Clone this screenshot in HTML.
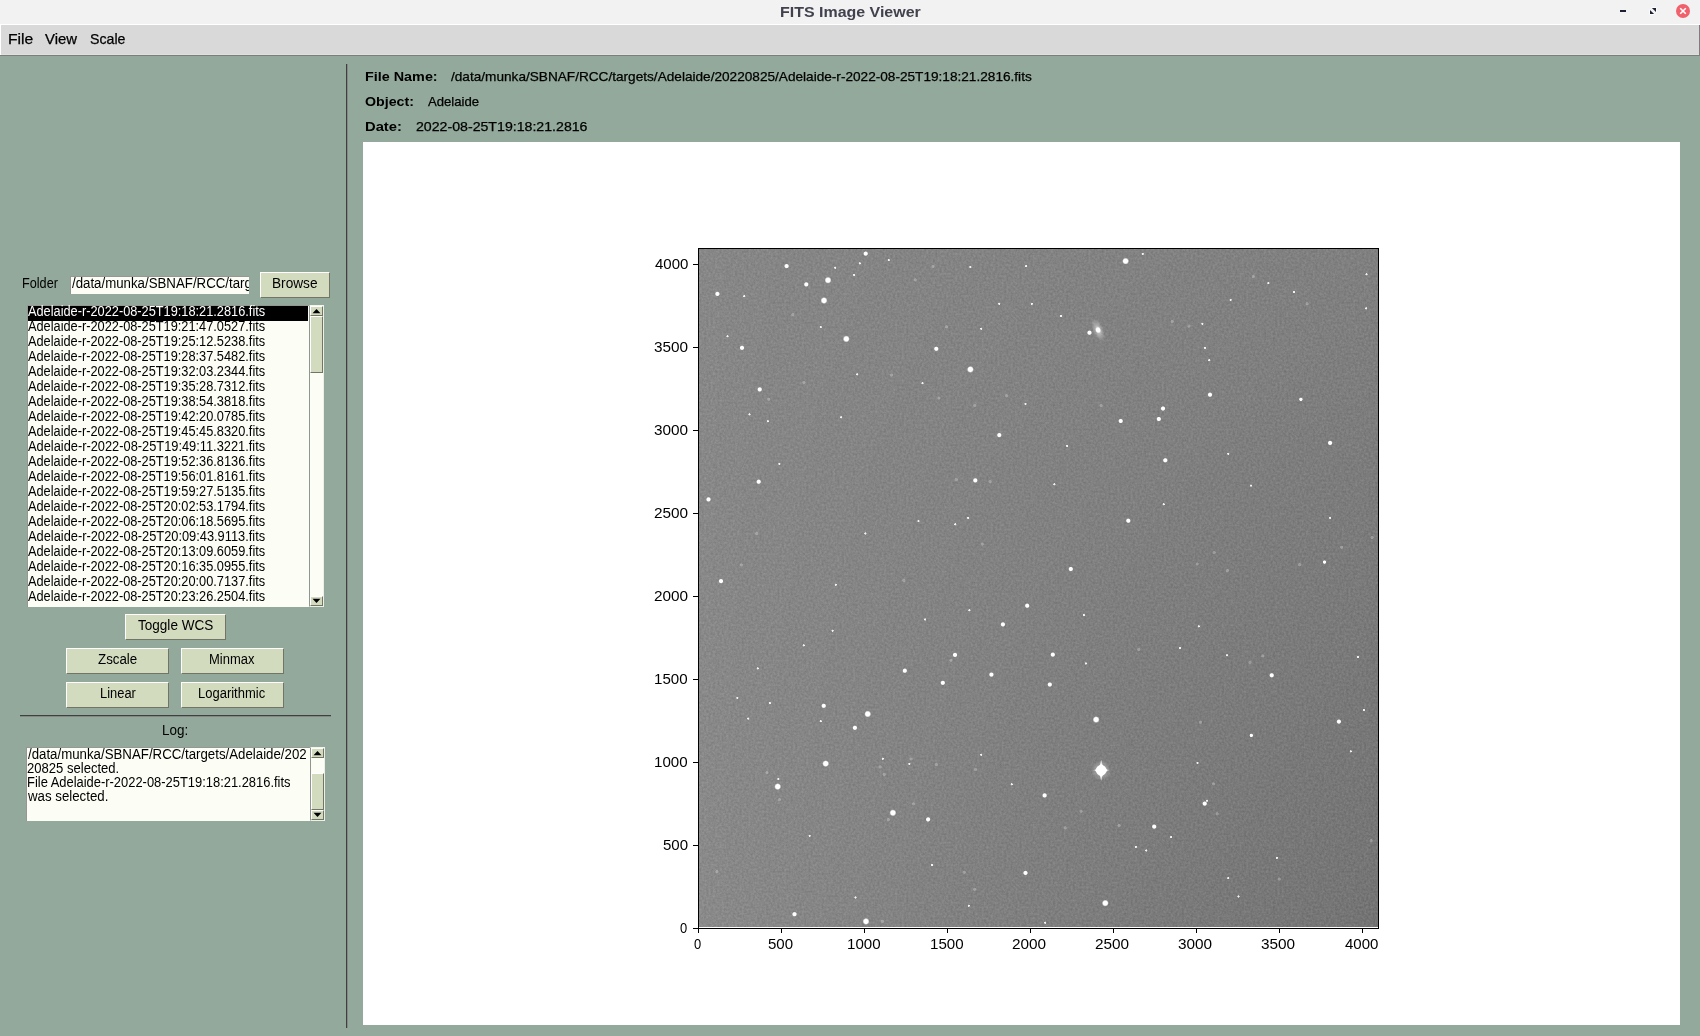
<!DOCTYPE html>
<html><head><meta charset="utf-8"><title>FITS Image Viewer</title>
<style>html,body{margin:0;padding:0;width:1700px;height:1036px;overflow:hidden;background:#92a99b;font-family:"Liberation Sans",sans-serif}
div{font-family:"Liberation Sans",sans-serif}</style></head><body>
<div style="position:absolute;left:0px;top:0px;width:1700px;height:24px;background:#f2f2f2"></div>
<div style="position:absolute;left:0px;top:24px;width:1700px;height:1px;background:#ffffff"></div>
<div style="position:absolute;left:0px;top:25px;width:1700px;height:31px;background:#d9d9d9"></div>
<div style="position:absolute;left:0px;top:25px;width:1px;height:31px;background:#ffffff"></div>
<div style="position:absolute;left:1px;top:54px;width:1698px;height:1px;background:#e0e0e0"></div>
<div style="position:absolute;left:0px;top:55px;width:1700px;height:1px;background:#7d7d7d"></div>
<div style="position:absolute;left:1699px;top:25px;width:1px;height:31px;background:#7d7d7d"></div>
<div style="position:absolute;left:0px;top:56px;width:1700px;height:980px;background:#92a99b"></div>
<div style="position:absolute;left:346px;top:64px;width:1px;height:964px;background:#404040"></div>
<div style="position:absolute;left:347px;top:64px;width:1px;height:964px;background:#848985"></div>
<div style="position:absolute;left:20px;top:715px;width:311px;height:1px;background:#404040"></div>
<div style="position:absolute;left:20px;top:716px;width:311px;height:1px;background:#848985"></div>
<div style="position:absolute;left:70px;top:276px;width:179px;height:18px;background:#fcfdf4;border-top:1px solid #959795;border-left:1px solid #959795;box-sizing:border-box"></div>
<div style="position:absolute;left:260px;top:272px;width:70px;height:26px;background:#d3dbbf;border-top:1px solid #fff;border-left:1px solid #fff;border-bottom:1px solid #727466;border-right:1px solid #727466;box-sizing:border-box"></div>
<div style="position:absolute;left:27px;top:305px;width:282px;height:302px;background:#fcfdf4;border-top:1px solid #959795;border-left:1px solid #959795;box-sizing:border-box"></div>
<div style="position:absolute;left:28px;top:306px;width:280px;height:15px;background:#000"></div>
<div style="position:absolute;left:309px;top:305px;width:15px;height:302px;background:#fcfdf4;border-left:1px solid #8f9690;border-top:1px solid #f4f6ee;border-right:1px solid #eef0e6;border-bottom:1px solid #eef0e6;box-sizing:border-box"></div>
<div style="position:absolute;left:310px;top:306px;width:13px;height:10px;background:#d3dbbf;border-top:1px solid #fff;border-left:1px solid #fff;border-bottom:1px solid #727466;border-right:1px solid #727466;box-sizing:border-box"></div>
<div style="position:absolute;left:310px;top:596px;width:13px;height:10px;background:#d3dbbf;border-top:1px solid #fff;border-left:1px solid #fff;border-bottom:1px solid #727466;border-right:1px solid #727466;box-sizing:border-box"></div>
<div style="position:absolute;left:310px;top:316px;width:13px;height:57px;background:#d3dbbf;border-top:1px solid #fff;border-left:1px solid #fff;border-bottom:1px solid #727466;border-right:1px solid #727466;box-sizing:border-box"></div>
<div style="position:absolute;left:125px;top:614px;width:101px;height:26px;background:#d3dbbf;border-top:1px solid #fff;border-left:1px solid #fff;border-bottom:1px solid #727466;border-right:1px solid #727466;box-sizing:border-box"></div>
<div style="position:absolute;left:66px;top:648px;width:103px;height:26px;background:#d3dbbf;border-top:1px solid #fff;border-left:1px solid #fff;border-bottom:1px solid #727466;border-right:1px solid #727466;box-sizing:border-box"></div>
<div style="position:absolute;left:181px;top:648px;width:103px;height:26px;background:#d3dbbf;border-top:1px solid #fff;border-left:1px solid #fff;border-bottom:1px solid #727466;border-right:1px solid #727466;box-sizing:border-box"></div>
<div style="position:absolute;left:66px;top:682px;width:103px;height:26px;background:#d3dbbf;border-top:1px solid #fff;border-left:1px solid #fff;border-bottom:1px solid #727466;border-right:1px solid #727466;box-sizing:border-box"></div>
<div style="position:absolute;left:181px;top:682px;width:103px;height:26px;background:#d3dbbf;border-top:1px solid #fff;border-left:1px solid #fff;border-bottom:1px solid #727466;border-right:1px solid #727466;box-sizing:border-box"></div>
<div style="position:absolute;left:26px;top:747px;width:285px;height:74px;background:#fcfdf4;border-top:1px solid #959795;border-left:1px solid #959795;box-sizing:border-box"></div>
<div style="position:absolute;left:310px;top:747px;width:15px;height:74px;background:#fcfdf4;border-left:1px solid #8f9690;border-top:1px solid #f4f6ee;border-right:1px solid #eef0e6;border-bottom:1px solid #eef0e6;box-sizing:border-box"></div>
<div style="position:absolute;left:311px;top:748px;width:13px;height:10px;background:#d3dbbf;border-top:1px solid #fff;border-left:1px solid #fff;border-bottom:1px solid #727466;border-right:1px solid #727466;box-sizing:border-box"></div>
<div style="position:absolute;left:311px;top:810px;width:13px;height:10px;background:#d3dbbf;border-top:1px solid #fff;border-left:1px solid #fff;border-bottom:1px solid #727466;border-right:1px solid #727466;box-sizing:border-box"></div>
<div style="position:absolute;left:311px;top:773px;width:13px;height:37px;background:#d3dbbf;border-top:1px solid #fff;border-left:1px solid #fff;border-bottom:1px solid #727466;border-right:1px solid #727466;box-sizing:border-box"></div>
<div style="position:absolute;left:363px;top:142px;width:1317px;height:883px;background:#ffffff"></div>
<div style="position:absolute;left:698px;top:248px;width:681px;height:681px;border:1px solid #000;box-sizing:border-box"></div>
<div style="position:absolute;left:693px;top:928px;width:5px;height:1px;background:#000"></div>
<div style="position:absolute;left:698px;top:928px;width:1px;height:5px;background:#000"></div>
<div style="position:absolute;left:693px;top:845px;width:5px;height:1px;background:#000"></div>
<div style="position:absolute;left:781px;top:928px;width:1px;height:5px;background:#000"></div>
<div style="position:absolute;left:693px;top:762px;width:5px;height:1px;background:#000"></div>
<div style="position:absolute;left:864px;top:928px;width:1px;height:5px;background:#000"></div>
<div style="position:absolute;left:693px;top:679px;width:5px;height:1px;background:#000"></div>
<div style="position:absolute;left:947px;top:928px;width:1px;height:5px;background:#000"></div>
<div style="position:absolute;left:693px;top:596px;width:5px;height:1px;background:#000"></div>
<div style="position:absolute;left:1030px;top:928px;width:1px;height:5px;background:#000"></div>
<div style="position:absolute;left:693px;top:513px;width:5px;height:1px;background:#000"></div>
<div style="position:absolute;left:1113px;top:928px;width:1px;height:5px;background:#000"></div>
<div style="position:absolute;left:693px;top:430px;width:5px;height:1px;background:#000"></div>
<div style="position:absolute;left:1196px;top:928px;width:1px;height:5px;background:#000"></div>
<div style="position:absolute;left:693px;top:347px;width:5px;height:1px;background:#000"></div>
<div style="position:absolute;left:1279px;top:928px;width:1px;height:5px;background:#000"></div>
<div style="position:absolute;left:693px;top:264px;width:5px;height:1px;background:#000"></div>
<div style="position:absolute;left:1362px;top:928px;width:1px;height:5px;background:#000"></div>
<svg style="position:absolute;left:1600px;top:0" width="100" height="24" viewBox="0 0 100 24"><rect x="20" y="10" width="6" height="2" fill="#1c2030"/><path d="M51.9 7.9H56V12zM50 10V14.1H54.1z" fill="#1c2030" stroke="#fff" stroke-width="1.2" stroke-linejoin="round" paint-order="stroke"/><circle cx="83" cy="11" r="7" fill="#f0616b"/><path d="M80.2 8.2l5.6 5.6M85.8 8.2l-5.6 5.6" stroke="#fff" stroke-width="1.6"/></svg><svg style="position:absolute;left:0;top:0;overflow:visible" width="1" height="1"><path d="M312.5 313.3h8l-4-4.3z" fill="#000"/><path d="M312.5 598.8h8l-4 4.3z" fill="#000"/></svg><svg style="position:absolute;left:0;top:0;overflow:visible" width="1" height="1"><path d="M313.5 755.3h8l-4-4.3z" fill="#000"/><path d="M313.5 812.8h8l-4 4.3z" fill="#000"/></svg><svg style="position:absolute;left:699px;top:249px" width="679" height="678" viewBox="699 249 679 678"><defs><linearGradient id="gL" x1="0" y1="0" x2="0" y2="1"><stop offset="0" stop-color="#878787"/><stop offset="1" stop-color="#8a8a8a"/></linearGradient><linearGradient id="gR" x1="0" y1="0" x2="1" y2="0"><stop offset="0" stop-color="#000" stop-opacity="0"/><stop offset="1" stop-color="#000" stop-opacity="1"/></linearGradient><linearGradient id="gM" x1="0" y1="0" x2="0" y2="1"><stop offset="0" stop-color="#fff" stop-opacity="0.052"/><stop offset="1" stop-color="#fff" stop-opacity="0.16"/></linearGradient><mask id="mk" maskUnits="userSpaceOnUse" x="699" y="249" width="679" height="678"><rect x="699" y="249" width="679" height="678" fill="url(#gM)"/></mask><radialGradient id="st"><stop offset="0" stop-color="#fff"/><stop offset="0.6" stop-color="#fff"/><stop offset="1" stop-color="#fff" stop-opacity="0"/></radialGradient><radialGradient id="gal"><stop offset="0" stop-color="#fff" stop-opacity="0.5"/><stop offset="1" stop-color="#fff" stop-opacity="0"/></radialGradient><radialGradient id="gal2"><stop offset="0" stop-color="#fff" stop-opacity="0.7"/><stop offset="0.5" stop-color="#fff" stop-opacity="0.3"/><stop offset="1" stop-color="#fff" stop-opacity="0"/></radialGradient><filter id="nz" x="0" y="0" width="100%" height="100%" color-interpolation-filters="sRGB"><feTurbulence type="fractalNoise" baseFrequency="0.45" numOctaves="2" seed="3" result="t"/><feColorMatrix in="t" type="matrix" values="1 0 0 0 0  1 0 0 0 0  1 0 0 0 0  0 0 0 0 1" result="g"/><feComposite in="SourceGraphic" in2="g" operator="arithmetic" k1="0" k2="1" k3="0.13" k4="-0.065"/></filter></defs><g filter="url(#nz)"><rect x="699" y="249" width="679" height="678" fill="url(#gL)"/><rect x="699" y="249" width="679" height="678" fill="url(#gR)" mask="url(#mk)"/></g><circle cx="828.0" cy="280.2" r="3.5" fill="url(#st)" fill-opacity="1"/><circle cx="824.0" cy="300.5" r="3.5" fill="url(#st)" fill-opacity="1"/><circle cx="846.3" cy="338.9" r="3.5" fill="url(#st)" fill-opacity="1"/><circle cx="970.4" cy="369.4" r="3.5" fill="url(#st)" fill-opacity="1"/><circle cx="717.4" cy="293.9" r="2.6" fill="url(#st)" fill-opacity="1"/><circle cx="806.3" cy="284.4" r="2.6" fill="url(#st)" fill-opacity="1"/><circle cx="936.3" cy="348.8" r="2.6" fill="url(#st)" fill-opacity="1"/><circle cx="999.3" cy="435.1" r="2.6" fill="url(#st)" fill-opacity="1"/><circle cx="975.3" cy="480.4" r="2.6" fill="url(#st)" fill-opacity="1"/><circle cx="758.7" cy="481.7" r="2.6" fill="url(#st)" fill-opacity="1"/><circle cx="708.5" cy="499.4" r="2.6" fill="url(#st)" fill-opacity="1"/><circle cx="721.0" cy="581.1" r="2.6" fill="url(#st)" fill-opacity="1"/><circle cx="865.7" cy="253.6" r="2.6" fill="url(#st)" fill-opacity="1"/><circle cx="742.0" cy="347.8" r="2.6" fill="url(#st)" fill-opacity="1"/><circle cx="759.7" cy="389.4" r="2.6" fill="url(#st)" fill-opacity="1"/><circle cx="786.6" cy="266.1" r="2.6" fill="url(#st)" fill-opacity="1"/><circle cx="854.2" cy="274.9" r="1.4" fill="url(#st)" fill-opacity="0.9"/><circle cx="888.7" cy="260.1" r="1.4" fill="url(#st)" fill-opacity="0.9"/><circle cx="859.8" cy="263.4" r="1.4" fill="url(#st)" fill-opacity="0.9"/><circle cx="835.2" cy="267.7" r="1.4" fill="url(#st)" fill-opacity="0.9"/><circle cx="820.7" cy="327.1" r="1.4" fill="url(#st)" fill-opacity="0.9"/><circle cx="727.5" cy="336.3" r="1.4" fill="url(#st)" fill-opacity="0.9"/><circle cx="767.9" cy="421.3" r="1.4" fill="url(#st)" fill-opacity="0.9"/><circle cx="968.1" cy="517.8" r="1.4" fill="url(#st)" fill-opacity="0.9"/><circle cx="841.1" cy="417.3" r="1.4" fill="url(#st)" fill-opacity="0.9"/><circle cx="779.4" cy="463.9" r="1.4" fill="url(#st)" fill-opacity="0.9"/><circle cx="918.5" cy="521.1" r="1.4" fill="url(#st)" fill-opacity="0.9"/><circle cx="955.3" cy="524.3" r="1.4" fill="url(#st)" fill-opacity="0.9"/><circle cx="865.4" cy="533.5" r="1.4" fill="url(#st)" fill-opacity="0.9"/><circle cx="835.8" cy="584.7" r="1.4" fill="url(#st)" fill-opacity="0.9"/><circle cx="981.2" cy="328.7" r="1.4" fill="url(#st)" fill-opacity="0.9"/><circle cx="1025.5" cy="403.9" r="1.4" fill="url(#st)" fill-opacity="0.9"/><circle cx="1026.2" cy="266.1" r="1.4" fill="url(#st)" fill-opacity="0.9"/><circle cx="970.4" cy="267.0" r="1.4" fill="url(#st)" fill-opacity="0.9"/><circle cx="999.3" cy="303.8" r="1.4" fill="url(#st)" fill-opacity="0.9"/><circle cx="1031.8" cy="303.8" r="1.4" fill="url(#st)" fill-opacity="0.9"/><circle cx="857.2" cy="374.4" r="1.4" fill="url(#st)" fill-opacity="0.9"/><circle cx="922.5" cy="383.2" r="1.4" fill="url(#st)" fill-opacity="0.9"/><circle cx="744.3" cy="296.2" r="1.4" fill="url(#st)" fill-opacity="0.9"/><circle cx="749.5" cy="414.4" r="1.4" fill="url(#st)" fill-opacity="0.9"/><circle cx="792.8" cy="314.6" r="2.0" fill="url(#st)" fill-opacity="0.25"/><circle cx="768.6" cy="399.3" r="2.0" fill="url(#st)" fill-opacity="0.25"/><circle cx="804.0" cy="382.6" r="2.0" fill="url(#st)" fill-opacity="0.25"/><circle cx="891.6" cy="375.0" r="2.0" fill="url(#st)" fill-opacity="0.25"/><circle cx="915.3" cy="279.8" r="2.0" fill="url(#st)" fill-opacity="0.25"/><circle cx="933.0" cy="266.4" r="2.0" fill="url(#st)" fill-opacity="0.25"/><circle cx="946.4" cy="326.8" r="2.0" fill="url(#st)" fill-opacity="0.25"/><circle cx="938.9" cy="398.0" r="2.0" fill="url(#st)" fill-opacity="0.25"/><circle cx="974.7" cy="405.5" r="2.0" fill="url(#st)" fill-opacity="0.25"/><circle cx="1006.5" cy="395.7" r="2.0" fill="url(#st)" fill-opacity="0.25"/><circle cx="956.3" cy="479.4" r="2.0" fill="url(#st)" fill-opacity="0.25"/><circle cx="990.1" cy="481.7" r="2.0" fill="url(#st)" fill-opacity="0.25"/><circle cx="756.7" cy="533.5" r="2.0" fill="url(#st)" fill-opacity="0.25"/><circle cx="741.3" cy="565.0" r="2.0" fill="url(#st)" fill-opacity="0.25"/><circle cx="903.8" cy="580.5" r="2.0" fill="url(#st)" fill-opacity="0.25"/><circle cx="982.2" cy="544.0" r="2.0" fill="url(#st)" fill-opacity="0.25"/><circle cx="1125.6" cy="261.1" r="3.5" fill="url(#st)" fill-opacity="1"/><circle cx="1158.8" cy="419.0" r="2.6" fill="url(#st)" fill-opacity="1"/><circle cx="1163.0" cy="408.5" r="2.6" fill="url(#st)" fill-opacity="1"/><circle cx="1120.7" cy="421.0" r="2.6" fill="url(#st)" fill-opacity="1"/><circle cx="1128.3" cy="520.7" r="2.6" fill="url(#st)" fill-opacity="1"/><circle cx="1089.5" cy="332.7" r="2.6" fill="url(#st)" fill-opacity="1"/><circle cx="1210.0" cy="394.7" r="2.6" fill="url(#st)" fill-opacity="1"/><circle cx="1165.3" cy="460.3" r="2.6" fill="url(#st)" fill-opacity="1"/><circle cx="1070.8" cy="569.0" r="2.6" fill="url(#st)" fill-opacity="1"/><circle cx="1330.1" cy="442.9" r="2.6" fill="url(#st)" fill-opacity="1"/><circle cx="1300.9" cy="399.3" r="2.1" fill="url(#st)" fill-opacity="1"/><circle cx="1324.5" cy="562.1" r="2.1" fill="url(#st)" fill-opacity="1"/><circle cx="1061.0" cy="315.9" r="1.4" fill="url(#st)" fill-opacity="0.9"/><circle cx="1142.7" cy="253.9" r="1.4" fill="url(#st)" fill-opacity="0.9"/><circle cx="1205.0" cy="347.8" r="1.4" fill="url(#st)" fill-opacity="0.9"/><circle cx="1209.3" cy="360.2" r="1.4" fill="url(#st)" fill-opacity="0.9"/><circle cx="1067.2" cy="445.9" r="1.4" fill="url(#st)" fill-opacity="0.9"/><circle cx="1054.4" cy="484.3" r="1.4" fill="url(#st)" fill-opacity="0.9"/><circle cx="1228.3" cy="453.8" r="1.4" fill="url(#st)" fill-opacity="0.9"/><circle cx="1251.0" cy="485.6" r="1.4" fill="url(#st)" fill-opacity="0.9"/><circle cx="1330.1" cy="517.8" r="1.4" fill="url(#st)" fill-opacity="0.9"/><circle cx="1163.7" cy="504.3" r="1.4" fill="url(#st)" fill-opacity="0.9"/><circle cx="1366.5" cy="274.3" r="1.4" fill="url(#st)" fill-opacity="0.9"/><circle cx="1268.4" cy="283.1" r="1.4" fill="url(#st)" fill-opacity="0.9"/><circle cx="1294.0" cy="292.0" r="1.4" fill="url(#st)" fill-opacity="0.9"/><circle cx="1202.4" cy="323.8" r="1.4" fill="url(#st)" fill-opacity="0.9"/><circle cx="1230.6" cy="299.9" r="1.4" fill="url(#st)" fill-opacity="0.9"/><circle cx="1366.2" cy="308.4" r="1.4" fill="url(#st)" fill-opacity="0.9"/><circle cx="1189.0" cy="326.1" r="2.0" fill="url(#st)" fill-opacity="0.25"/><circle cx="1172.2" cy="321.5" r="2.0" fill="url(#st)" fill-opacity="0.25"/><circle cx="1253.3" cy="276.6" r="2.0" fill="url(#st)" fill-opacity="0.25"/><circle cx="1307.1" cy="303.8" r="2.0" fill="url(#st)" fill-opacity="0.25"/><circle cx="1101.0" cy="405.5" r="2.0" fill="url(#st)" fill-opacity="0.25"/><circle cx="1197.2" cy="564.0" r="2.0" fill="url(#st)" fill-opacity="0.25"/><circle cx="1227.4" cy="570.6" r="2.0" fill="url(#st)" fill-opacity="0.25"/><circle cx="1341.6" cy="547.3" r="2.0" fill="url(#st)" fill-opacity="0.25"/><circle cx="1372.1" cy="537.5" r="2.0" fill="url(#st)" fill-opacity="0.25"/><circle cx="1299.6" cy="564.7" r="2.0" fill="url(#st)" fill-opacity="0.25"/><circle cx="1214.2" cy="552.6" r="2.0" fill="url(#st)" fill-opacity="0.25"/><circle cx="867.7" cy="714.0" r="3.5" fill="url(#st)" fill-opacity="1"/><circle cx="825.7" cy="763.6" r="3.5" fill="url(#st)" fill-opacity="1"/><circle cx="777.7" cy="786.6" r="3.5" fill="url(#st)" fill-opacity="1"/><circle cx="892.9" cy="812.8" r="3.5" fill="url(#st)" fill-opacity="1"/><circle cx="866.0" cy="921.4" r="3.5" fill="url(#st)" fill-opacity="1"/><circle cx="1027.2" cy="605.7" r="2.6" fill="url(#st)" fill-opacity="1"/><circle cx="1002.9" cy="624.4" r="2.6" fill="url(#st)" fill-opacity="1"/><circle cx="904.8" cy="670.7" r="2.6" fill="url(#st)" fill-opacity="1"/><circle cx="942.8" cy="682.8" r="2.6" fill="url(#st)" fill-opacity="1"/><circle cx="823.7" cy="705.8" r="2.6" fill="url(#st)" fill-opacity="1"/><circle cx="854.9" cy="727.8" r="2.6" fill="url(#st)" fill-opacity="1"/><circle cx="928.1" cy="819.4" r="2.6" fill="url(#st)" fill-opacity="1"/><circle cx="991.4" cy="674.6" r="2.6" fill="url(#st)" fill-opacity="1"/><circle cx="955.0" cy="654.9" r="2.6" fill="url(#st)" fill-opacity="1"/><circle cx="1025.5" cy="872.9" r="2.6" fill="url(#st)" fill-opacity="1"/><circle cx="794.5" cy="914.2" r="2.6" fill="url(#st)" fill-opacity="1"/><circle cx="769.9" cy="703.2" r="1.4" fill="url(#st)" fill-opacity="0.9"/><circle cx="778.4" cy="779.0" r="1.4" fill="url(#st)" fill-opacity="0.9"/><circle cx="737.4" cy="697.9" r="1.4" fill="url(#st)" fill-opacity="0.9"/><circle cx="748.2" cy="718.6" r="1.4" fill="url(#st)" fill-opacity="0.9"/><circle cx="757.7" cy="668.4" r="1.4" fill="url(#st)" fill-opacity="0.9"/><circle cx="882.8" cy="758.7" r="1.4" fill="url(#st)" fill-opacity="0.9"/><circle cx="909.4" cy="763.9" r="1.4" fill="url(#st)" fill-opacity="0.9"/><circle cx="981.2" cy="754.7" r="1.4" fill="url(#st)" fill-opacity="0.9"/><circle cx="1011.7" cy="784.3" r="1.4" fill="url(#st)" fill-opacity="0.9"/><circle cx="932.0" cy="865.0" r="1.4" fill="url(#st)" fill-opacity="0.9"/><circle cx="855.5" cy="897.5" r="1.4" fill="url(#st)" fill-opacity="0.9"/><circle cx="809.6" cy="835.8" r="1.4" fill="url(#st)" fill-opacity="0.9"/><circle cx="803.7" cy="645.4" r="1.4" fill="url(#st)" fill-opacity="0.9"/><circle cx="832.6" cy="630.7" r="1.4" fill="url(#st)" fill-opacity="0.9"/><circle cx="969.4" cy="610.3" r="1.4" fill="url(#st)" fill-opacity="0.9"/><circle cx="925.1" cy="619.5" r="1.4" fill="url(#st)" fill-opacity="0.9"/><circle cx="820.7" cy="721.2" r="1.4" fill="url(#st)" fill-opacity="0.9"/><circle cx="968.8" cy="905.7" r="1.4" fill="url(#st)" fill-opacity="0.9"/><circle cx="951.0" cy="660.2" r="2.0" fill="url(#st)" fill-opacity="0.25"/><circle cx="880.1" cy="766.9" r="2.0" fill="url(#st)" fill-opacity="0.25"/><circle cx="884.1" cy="774.4" r="2.0" fill="url(#st)" fill-opacity="0.25"/><circle cx="911.0" cy="759.0" r="2.0" fill="url(#st)" fill-opacity="0.25"/><circle cx="936.3" cy="764.6" r="2.0" fill="url(#st)" fill-opacity="0.25"/><circle cx="975.6" cy="769.5" r="2.0" fill="url(#st)" fill-opacity="0.25"/><circle cx="766.9" cy="772.8" r="2.0" fill="url(#st)" fill-opacity="0.25"/><circle cx="779.4" cy="799.7" r="2.0" fill="url(#st)" fill-opacity="0.25"/><circle cx="717.0" cy="871.6" r="2.0" fill="url(#st)" fill-opacity="0.25"/><circle cx="974.7" cy="889.3" r="2.0" fill="url(#st)" fill-opacity="0.25"/><circle cx="964.2" cy="872.2" r="2.0" fill="url(#st)" fill-opacity="0.25"/><circle cx="882.4" cy="921.4" r="2.0" fill="url(#st)" fill-opacity="0.25"/><circle cx="913.6" cy="803.9" r="2.0" fill="url(#st)" fill-opacity="0.25"/><circle cx="888.3" cy="819.7" r="2.0" fill="url(#st)" fill-opacity="0.25"/><circle cx="1096.1" cy="719.6" r="3.5" fill="url(#st)" fill-opacity="1"/><circle cx="1105.3" cy="903.1" r="3.5" fill="url(#st)" fill-opacity="1"/><circle cx="1049.8" cy="684.5" r="2.6" fill="url(#st)" fill-opacity="1"/><circle cx="1044.6" cy="795.4" r="2.6" fill="url(#st)" fill-opacity="1"/><circle cx="1154.2" cy="826.6" r="2.6" fill="url(#st)" fill-opacity="1"/><circle cx="1052.8" cy="654.6" r="2.6" fill="url(#st)" fill-opacity="1"/><circle cx="1271.7" cy="675.3" r="2.6" fill="url(#st)" fill-opacity="1"/><circle cx="1338.9" cy="721.6" r="2.6" fill="url(#st)" fill-opacity="1"/><circle cx="1204.7" cy="803.6" r="2.6" fill="url(#st)" fill-opacity="1"/><circle cx="1251.3" cy="735.4" r="2.1" fill="url(#st)" fill-opacity="1"/><circle cx="1085.9" cy="663.5" r="1.4" fill="url(#st)" fill-opacity="0.9"/><circle cx="1083.9" cy="615.2" r="1.4" fill="url(#st)" fill-opacity="0.9"/><circle cx="1227.0" cy="655.3" r="1.4" fill="url(#st)" fill-opacity="0.9"/><circle cx="1363.9" cy="710.1" r="1.4" fill="url(#st)" fill-opacity="0.9"/><circle cx="1350.8" cy="751.4" r="1.4" fill="url(#st)" fill-opacity="0.9"/><circle cx="1197.5" cy="762.9" r="1.4" fill="url(#st)" fill-opacity="0.9"/><circle cx="1207.0" cy="800.7" r="1.4" fill="url(#st)" fill-opacity="0.9"/><circle cx="1276.9" cy="857.8" r="1.4" fill="url(#st)" fill-opacity="0.9"/><circle cx="1171.2" cy="837.1" r="1.4" fill="url(#st)" fill-opacity="0.9"/><circle cx="1135.8" cy="846.9" r="1.4" fill="url(#st)" fill-opacity="0.9"/><circle cx="1146.3" cy="850.5" r="1.4" fill="url(#st)" fill-opacity="0.9"/><circle cx="1228.3" cy="878.1" r="1.4" fill="url(#st)" fill-opacity="0.9"/><circle cx="1238.5" cy="896.5" r="1.4" fill="url(#st)" fill-opacity="0.9"/><circle cx="1198.8" cy="626.4" r="1.4" fill="url(#st)" fill-opacity="0.9"/><circle cx="1180.1" cy="648.1" r="1.4" fill="url(#st)" fill-opacity="0.9"/><circle cx="1358.0" cy="657.2" r="1.4" fill="url(#st)" fill-opacity="0.9"/><circle cx="1045.2" cy="922.7" r="1.4" fill="url(#st)" fill-opacity="0.9"/><circle cx="1250.0" cy="662.5" r="2.0" fill="url(#st)" fill-opacity="0.25"/><circle cx="1262.8" cy="655.9" r="2.0" fill="url(#st)" fill-opacity="0.25"/><circle cx="1138.8" cy="649.4" r="2.0" fill="url(#st)" fill-opacity="0.25"/><circle cx="1200.5" cy="722.2" r="2.0" fill="url(#st)" fill-opacity="0.25"/><circle cx="1081.0" cy="811.2" r="2.0" fill="url(#st)" fill-opacity="0.25"/><circle cx="1065.2" cy="827.9" r="2.0" fill="url(#st)" fill-opacity="0.25"/><circle cx="1119.1" cy="825.6" r="2.0" fill="url(#st)" fill-opacity="0.25"/><circle cx="1213.6" cy="783.9" r="2.0" fill="url(#st)" fill-opacity="0.25"/><circle cx="1371.1" cy="840.7" r="2.0" fill="url(#st)" fill-opacity="0.25"/><circle cx="1279.2" cy="879.1" r="2.0" fill="url(#st)" fill-opacity="0.25"/><circle cx="1217.2" cy="813.8" r="2.0" fill="url(#st)" fill-opacity="0.25"/><circle cx="1101.2" cy="770.3" r="10" fill="url(#gal)"/><path d="M1099.5 766.3L1101.2 759.8L1102.9 766.3z M1099.5 774.3L1101.2 780.8L1102.9 774.3z" fill="#fff" opacity="0.75"/><path d="M1097.2 768.8L1092.7 770.3L1097.2 771.8z M1105.2 768.8L1109.7 770.3L1105.2 771.8z" fill="#fff" opacity="0.35"/><path d="M1101.2 763.7L1107.5 770.3L1101.2 776.9L1094.9 770.3z" fill="#fff"/><circle cx="1101.2" cy="770.3" r="5.3" fill="#fff"/><ellipse cx="1098.1" cy="330.0" rx="5.5" ry="12" transform="rotate(-22 1098.1 330.0)" fill="url(#gal2)"/><ellipse cx="1098.1" cy="330.0" rx="2.9" ry="3.4" transform="rotate(-22 1098.1 330.0)" fill="url(#st)"/></svg>
<div style="position:absolute;left:779.67px;top:5px;font-size:14.1px;line-height:14.1px;font-weight:bold;color:#42424f;white-space:pre;transform:scaleX(1.1325);transform-origin:0 0;">FITS Image Viewer</div>
<div style="position:absolute;left:7.54px;top:32px;font-size:14.1px;line-height:14.1px;font-weight:normal;color:#000;white-space:pre;transform:scaleX(1.1119);transform-origin:0 0;-webkit-text-stroke:0.25px #000;">File</div>
<div style="position:absolute;left:44.90px;top:32px;font-size:14.1px;line-height:14.1px;font-weight:normal;color:#000;white-space:pre;transform:scaleX(1.0567);transform-origin:0 0;-webkit-text-stroke:0.25px #000;">View</div>
<div style="position:absolute;left:89.59px;top:32px;font-size:14.1px;line-height:14.1px;font-weight:normal;color:#000;white-space:pre;transform:scaleX(1.0059);transform-origin:0 0;-webkit-text-stroke:0.25px #000;">Scale</div>
<div style="position:absolute;left:364.67px;top:71px;font-size:12.7px;line-height:12.7px;font-weight:bold;color:#000;white-space:pre;transform:scaleX(1.1323);transform-origin:0 0;">File Name:</div>
<div style="position:absolute;left:364.68px;top:96px;font-size:12.7px;line-height:12.7px;font-weight:bold;color:#000;white-space:pre;transform:scaleX(1.1190);transform-origin:0 0;">Object:</div>
<div style="position:absolute;left:364.74px;top:121px;font-size:12.7px;line-height:12.7px;font-weight:bold;color:#000;white-space:pre;transform:scaleX(1.1633);transform-origin:0 0;">Date:</div>
<div style="position:absolute;left:451.00px;top:71px;font-size:12.7px;line-height:12.7px;font-weight:normal;color:#000;white-space:pre;transform:scaleX(1.0735);transform-origin:0 0;-webkit-text-stroke:0.25px #000;">/data/munka/SBNAF/RCC/targets/Adelaide/20220825/Adelaide-r-2022-08-25T19:18:21.2816.fits</div>
<div style="position:absolute;left:428.20px;top:96px;font-size:12.7px;line-height:12.7px;font-weight:normal;color:#000;white-space:pre;transform:scaleX(1.0347);transform-origin:0 0;-webkit-text-stroke:0.25px #000;">Adelaide</div>
<div style="position:absolute;left:415.58px;top:121px;font-size:12.7px;line-height:12.7px;font-weight:normal;color:#000;white-space:pre;transform:scaleX(1.1151);transform-origin:0 0;-webkit-text-stroke:0.25px #000;">2022-08-25T19:18:21.2816</div>
<div style="position:absolute;left:21.89px;top:276px;font-size:14px;line-height:14px;font-weight:normal;color:#000;white-space:pre;transform:scaleX(0.9051);transform-origin:0 0;">Folder</div>
<div style="position:absolute;left:71px;top:277px;width:178px;height:16px;overflow:hidden"><div style="position:absolute;left:0.90px;top:-1px;font-size:14px;line-height:14px;white-space:pre;transform:scaleX(0.9474);transform-origin:0 0;">/data/munka/SBNAF/RCC/targets/Adelaide/202</div></div>
<div style="position:absolute;left:272.12px;top:276px;font-size:14px;line-height:14px;font-weight:normal;color:#000;white-space:pre;transform:scaleX(0.9756);transform-origin:0 0;">Browse</div>
<div style="position:absolute;left:28.00px;top:304px;font-size:14px;line-height:14px;font-weight:normal;color:#fff;white-space:pre;transform:scaleX(0.9123);transform-origin:0 0;">Adelaide-r-2022-08-25T19:18:21.2816.fits</div>
<div style="position:absolute;left:28.00px;top:319px;font-size:14px;line-height:14px;font-weight:normal;color:#000;white-space:pre;transform:scaleX(0.9123);transform-origin:0 0;">Adelaide-r-2022-08-25T19:21:47.0527.fits</div>
<div style="position:absolute;left:28.00px;top:334px;font-size:14px;line-height:14px;font-weight:normal;color:#000;white-space:pre;transform:scaleX(0.9123);transform-origin:0 0;">Adelaide-r-2022-08-25T19:25:12.5238.fits</div>
<div style="position:absolute;left:28.00px;top:349px;font-size:14px;line-height:14px;font-weight:normal;color:#000;white-space:pre;transform:scaleX(0.9123);transform-origin:0 0;">Adelaide-r-2022-08-25T19:28:37.5482.fits</div>
<div style="position:absolute;left:28.00px;top:364px;font-size:14px;line-height:14px;font-weight:normal;color:#000;white-space:pre;transform:scaleX(0.9123);transform-origin:0 0;">Adelaide-r-2022-08-25T19:32:03.2344.fits</div>
<div style="position:absolute;left:28.00px;top:379px;font-size:14px;line-height:14px;font-weight:normal;color:#000;white-space:pre;transform:scaleX(0.9123);transform-origin:0 0;">Adelaide-r-2022-08-25T19:35:28.7312.fits</div>
<div style="position:absolute;left:28.00px;top:394px;font-size:14px;line-height:14px;font-weight:normal;color:#000;white-space:pre;transform:scaleX(0.9123);transform-origin:0 0;">Adelaide-r-2022-08-25T19:38:54.3818.fits</div>
<div style="position:absolute;left:28.00px;top:409px;font-size:14px;line-height:14px;font-weight:normal;color:#000;white-space:pre;transform:scaleX(0.9123);transform-origin:0 0;">Adelaide-r-2022-08-25T19:42:20.0785.fits</div>
<div style="position:absolute;left:28.00px;top:424px;font-size:14px;line-height:14px;font-weight:normal;color:#000;white-space:pre;transform:scaleX(0.9123);transform-origin:0 0;">Adelaide-r-2022-08-25T19:45:45.8320.fits</div>
<div style="position:absolute;left:28.00px;top:439px;font-size:14px;line-height:14px;font-weight:normal;color:#000;white-space:pre;transform:scaleX(0.9158);transform-origin:0 0;">Adelaide-r-2022-08-25T19:49:11.3221.fits</div>
<div style="position:absolute;left:28.00px;top:454px;font-size:14px;line-height:14px;font-weight:normal;color:#000;white-space:pre;transform:scaleX(0.9123);transform-origin:0 0;">Adelaide-r-2022-08-25T19:52:36.8136.fits</div>
<div style="position:absolute;left:28.00px;top:469px;font-size:14px;line-height:14px;font-weight:normal;color:#000;white-space:pre;transform:scaleX(0.9123);transform-origin:0 0;">Adelaide-r-2022-08-25T19:56:01.8161.fits</div>
<div style="position:absolute;left:28.00px;top:484px;font-size:14px;line-height:14px;font-weight:normal;color:#000;white-space:pre;transform:scaleX(0.9123);transform-origin:0 0;">Adelaide-r-2022-08-25T19:59:27.5135.fits</div>
<div style="position:absolute;left:28.00px;top:499px;font-size:14px;line-height:14px;font-weight:normal;color:#000;white-space:pre;transform:scaleX(0.9123);transform-origin:0 0;">Adelaide-r-2022-08-25T20:02:53.1794.fits</div>
<div style="position:absolute;left:28.00px;top:514px;font-size:14px;line-height:14px;font-weight:normal;color:#000;white-space:pre;transform:scaleX(0.9123);transform-origin:0 0;">Adelaide-r-2022-08-25T20:06:18.5695.fits</div>
<div style="position:absolute;left:28.00px;top:529px;font-size:14px;line-height:14px;font-weight:normal;color:#000;white-space:pre;transform:scaleX(0.9158);transform-origin:0 0;">Adelaide-r-2022-08-25T20:09:43.9113.fits</div>
<div style="position:absolute;left:28.00px;top:544px;font-size:14px;line-height:14px;font-weight:normal;color:#000;white-space:pre;transform:scaleX(0.9123);transform-origin:0 0;">Adelaide-r-2022-08-25T20:13:09.6059.fits</div>
<div style="position:absolute;left:28.00px;top:559px;font-size:14px;line-height:14px;font-weight:normal;color:#000;white-space:pre;transform:scaleX(0.9123);transform-origin:0 0;">Adelaide-r-2022-08-25T20:16:35.0955.fits</div>
<div style="position:absolute;left:28.00px;top:574px;font-size:14px;line-height:14px;font-weight:normal;color:#000;white-space:pre;transform:scaleX(0.9123);transform-origin:0 0;">Adelaide-r-2022-08-25T20:20:00.7137.fits</div>
<div style="position:absolute;left:28.00px;top:589px;font-size:14px;line-height:14px;font-weight:normal;color:#000;white-space:pre;transform:scaleX(0.9123);transform-origin:0 0;">Adelaide-r-2022-08-25T20:23:26.2504.fits</div>
<div style="position:absolute;left:138.00px;top:618px;font-size:14px;line-height:14px;font-weight:normal;color:#000;white-space:pre;transform:scaleX(0.9675);transform-origin:0 0;">Toggle WCS</div>
<div style="position:absolute;left:98.00px;top:652px;font-size:14px;line-height:14px;font-weight:normal;color:#000;white-space:pre;transform:scaleX(0.9512);transform-origin:0 0;">Zscale</div>
<div style="position:absolute;left:208.57px;top:652px;font-size:14px;line-height:14px;font-weight:normal;color:#000;white-space:pre;transform:scaleX(0.9271);transform-origin:0 0;">Minmax</div>
<div style="position:absolute;left:99.58px;top:686px;font-size:14px;line-height:14px;font-weight:normal;color:#000;white-space:pre;transform:scaleX(0.9211);transform-origin:0 0;">Linear</div>
<div style="position:absolute;left:198.47px;top:686px;font-size:14px;line-height:14px;font-weight:normal;color:#000;white-space:pre;transform:scaleX(0.9282);transform-origin:0 0;">Logarithmic</div>
<div style="position:absolute;left:162.44px;top:723px;font-size:14px;line-height:14px;font-weight:normal;color:#000;white-space:pre;transform:scaleX(0.9600);transform-origin:0 0;">Log:</div>
<div style="position:absolute;left:28.30px;top:747px;font-size:14px;line-height:14px;font-weight:normal;color:#000;white-space:pre;transform:scaleX(0.9474);transform-origin:0 0;">/data/munka/SBNAF/RCC/targets/Adelaide/202</div>
<div style="position:absolute;left:27.37px;top:761px;font-size:14px;line-height:14px;font-weight:normal;color:#000;white-space:pre;transform:scaleX(0.9330);transform-origin:0 0;">20825 selected.</div>
<div style="position:absolute;left:27.38px;top:775px;font-size:14px;line-height:14px;font-weight:normal;color:#000;white-space:pre;transform:scaleX(0.9225);transform-origin:0 0;">File Adelaide-r-2022-08-25T19:18:21.2816.fits</div>
<div style="position:absolute;left:28.30px;top:789px;font-size:14px;line-height:14px;font-weight:normal;color:#000;white-space:pre;transform:scaleX(0.9476);transform-origin:0 0;">was selected.</div>
<div style="position:absolute;left:680.42px;top:921px;font-size:14.6px;line-height:14.6px;font-weight:normal;color:#000;white-space:pre;transform:scaleX(0.8855);transform-origin:0 0;">0</div>
<div style="position:absolute;left:693.77px;top:937px;font-size:14.6px;line-height:14.6px;font-weight:normal;color:#000;white-space:pre;transform:scaleX(0.8855);transform-origin:0 0;">0</div>
<div style="position:absolute;left:662.75px;top:838px;font-size:14.6px;line-height:14.6px;font-weight:normal;color:#000;white-space:pre;transform:scaleX(1.0311);transform-origin:0 0;">500</div>
<div style="position:absolute;left:767.86px;top:937px;font-size:14.6px;line-height:14.6px;font-weight:normal;color:#000;white-space:pre;transform:scaleX(1.0311);transform-origin:0 0;">500</div>
<div style="position:absolute;left:654.37px;top:755px;font-size:14.6px;line-height:14.6px;font-weight:normal;color:#000;white-space:pre;transform:scaleX(1.0354);transform-origin:0 0;">1000</div>
<div style="position:absolute;left:846.67px;top:937px;font-size:14.6px;line-height:14.6px;font-weight:normal;color:#000;white-space:pre;transform:scaleX(1.0354);transform-origin:0 0;">1000</div>
<div style="position:absolute;left:654.37px;top:672px;font-size:14.6px;line-height:14.6px;font-weight:normal;color:#000;white-space:pre;transform:scaleX(1.0354);transform-origin:0 0;">1500</div>
<div style="position:absolute;left:929.67px;top:937px;font-size:14.6px;line-height:14.6px;font-weight:normal;color:#000;white-space:pre;transform:scaleX(1.0354);transform-origin:0 0;">1500</div>
<div style="position:absolute;left:653.84px;top:589px;font-size:14.6px;line-height:14.6px;font-weight:normal;color:#000;white-space:pre;transform:scaleX(1.0518);transform-origin:0 0;">2000</div>
<div style="position:absolute;left:1012.39px;top:937px;font-size:14.6px;line-height:14.6px;font-weight:normal;color:#000;white-space:pre;transform:scaleX(1.0518);transform-origin:0 0;">2000</div>
<div style="position:absolute;left:653.84px;top:506px;font-size:14.6px;line-height:14.6px;font-weight:normal;color:#000;white-space:pre;transform:scaleX(1.0518);transform-origin:0 0;">2500</div>
<div style="position:absolute;left:1095.39px;top:937px;font-size:14.6px;line-height:14.6px;font-weight:normal;color:#000;white-space:pre;transform:scaleX(1.0518);transform-origin:0 0;">2500</div>
<div style="position:absolute;left:653.88px;top:423px;font-size:14.6px;line-height:14.6px;font-weight:normal;color:#000;white-space:pre;transform:scaleX(1.0505);transform-origin:0 0;">3000</div>
<div style="position:absolute;left:1178.42px;top:937px;font-size:14.6px;line-height:14.6px;font-weight:normal;color:#000;white-space:pre;transform:scaleX(1.0505);transform-origin:0 0;">3000</div>
<div style="position:absolute;left:653.88px;top:340px;font-size:14.6px;line-height:14.6px;font-weight:normal;color:#000;white-space:pre;transform:scaleX(1.0505);transform-origin:0 0;">3500</div>
<div style="position:absolute;left:1261.42px;top:937px;font-size:14.6px;line-height:14.6px;font-weight:normal;color:#000;white-space:pre;transform:scaleX(1.0505);transform-origin:0 0;">3500</div>
<div style="position:absolute;left:654.55px;top:257px;font-size:14.6px;line-height:14.6px;font-weight:normal;color:#000;white-space:pre;transform:scaleX(1.0296);transform-origin:0 0;">4000</div>
<div style="position:absolute;left:1345.28px;top:937px;font-size:14.6px;line-height:14.6px;font-weight:normal;color:#000;white-space:pre;transform:scaleX(1.0296);transform-origin:0 0;">4000</div>
</body></html>
